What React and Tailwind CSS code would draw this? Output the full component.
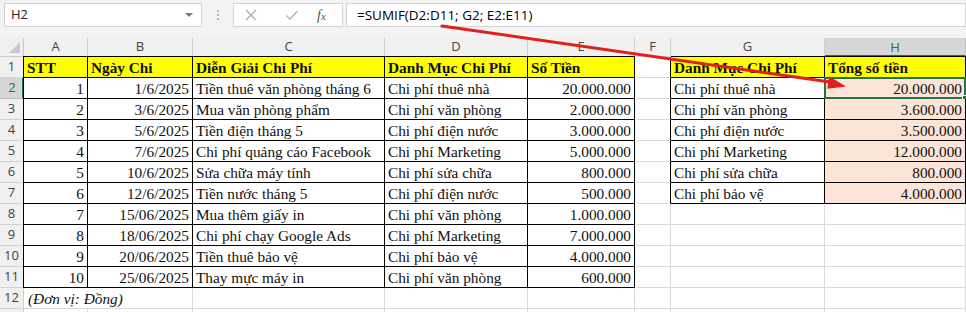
import React from 'react';

const rows = [
  [1, '1/6/2025', 'Tiền thuê văn phòng tháng 6', 'Chi phí thuê nhà', '20.000.000'],
  [2, '3/6/2025', 'Mua văn phòng phẩm', 'Chi phí văn phòng', '2.000.000'],
  [3, '5/6/2025', 'Tiền điện tháng 5', 'Chi phí điện nước', '3.000.000'],
  [4, '7/6/2025', 'Chi phí quảng cáo Facebook', 'Chi phí Marketing', '5.000.000'],
  [5, '10/6/2025', 'Sửa chữa máy tính', 'Chi phí sửa chữa', '800.000'],
  [6, '12/6/2025', 'Tiền nước tháng 5', 'Chi phí điện nước', '500.000'],
  [7, '15/06/2025', 'Mua thêm giấy in', 'Chi phí văn phòng', '1.000.000'],
  [8, '18/06/2025', 'Chi phí chạy Google Ads', 'Chi phí Marketing', '7.000.000'],
  [9, '20/06/2025', 'Tiền thuê bảo vệ', 'Chi phí bảo vệ', '4.000.000'],
  [10, '25/06/2025', 'Thay mực máy in', 'Chi phí văn phòng', '600.000'],
];

const totals = [
  ['Chi phí thuê nhà', '20.000.000'],
  ['Chi phí văn phòng', '3.600.000'],
  ['Chi phí điện nước', '3.500.000'],
  ['Chi phí Marketing', '12.000.000'],
  ['Chi phí sửa chữa', '800.000'],
  ['Chi phí bảo vệ', '4.000.000'],
];

const cell = 'h-[21px] px-[3px] text-[15.3px] leading-[21px] whitespace-nowrap overflow-hidden text-[#111] border-r border-b';
const black = 'border-black';
const grid = 'border-[#dadada]';

function RowHead({ n, active }) {
  return (
    <div
      className={
        active
          ? 'h-[21px] flex items-center justify-center text-[13px] text-[#217346] bg-[#d6d6d6] border-b border-[#bdbdbd] shadow-[inset_-2px_0_0_#217346]'
          : 'h-[21px] flex items-center justify-center text-[13px] text-[#444] bg-[#f0f0f0] border-r border-b border-[#d0d0d0]'
      }
    >
      {n}
    </div>
  );
}

export default function App() {
  return (
    <div className="relative w-[966px] h-[312px] overflow-hidden bg-[#f3f3f3] font-['Liberation_Serif',serif]">
      {/* formula bar */}
      <div className="h-[38px] flex items-start pt-[3px] pl-[4px] font-['Open_Sans',sans-serif]">
        <div className="w-[198px] h-[24px] bg-white border border-[#d4d4d4] flex items-center justify-between pl-[6px] pr-[8px]">
          <span className="text-[13px] text-[#222]">H2</span>
          <span className="w-0 h-0 border-l-[4px] border-r-[4px] border-t-[4px] border-l-transparent border-r-transparent border-t-[#777]" />
        </div>
        <div className="w-[31px] h-[24px] flex flex-col items-center justify-center gap-[2px]">
          <span className="w-[2px] h-[2px] bg-[#b5b5b5]" />
          <span className="w-[2px] h-[2px] bg-[#b5b5b5]" />
          <span className="w-[2px] h-[2px] bg-[#b5b5b5]" />
        </div>
        <div className="w-[110px] h-[24px] bg-white border border-[#d4d4d4] flex items-center">
          <svg width="14" height="14" viewBox="0 0 14 14" className="ml-[10px]">
            <path d="M2 2 L12 12 M12 2 L2 12" stroke="#b0b0b0" strokeWidth="1.3" />
          </svg>
          <svg width="14" height="14" viewBox="0 0 14 14" className="ml-[27px]">
            <path d="M1.5 7.5 L5 11 L12.5 3" stroke="#b0b0b0" strokeWidth="1.3" fill="none" />
          </svg>
          <span className="ml-[18px] text-[14px] italic text-[#555] font-['Liberation_Serif',serif]">
            f<span className="text-[11px]">x</span>
          </span>
        </div>
        <div className="ml-[3px] flex-1 h-[24px] bg-white border border-[#d4d4d4] flex items-center pl-[10px]">
          <span className="text-[13.5px] text-black">=SUMIF(D2:D11; G2; E2:E11)</span>
        </div>
      </div>

      {/* sheet */}
      <div className="grid grid-cols-[24px_64px_105px_192px_143px_107px_36px_154px_141px] bg-white">
        {/* column headers */}
        <div className="h-[19px] bg-[#f0f0f0] border-r border-b border-[#c8c8c8] flex items-end justify-end p-[3px]">
          <span className="w-0 h-0 border-l-[11px] border-l-transparent [border-bottom:11px_solid_#c9c9c9]" />
        </div>
        {['A', 'B', 'C', 'D', 'E', 'F', 'G'].map((c) => (
          <div key={c} className="h-[19px] bg-[#f0f0f0] border-r border-b border-[#d0d0d0] flex items-center justify-center text-[13px] text-[#444] font-['Open_Sans',sans-serif]">
            {c}
          </div>
        ))}
        <div className="h-[19px] bg-[#d6d6d6] border-r border-[#bdbdbd] shadow-[inset_0_-2px_0_#217346] flex items-center justify-center text-[13px] text-[#217346] font-['Open_Sans',sans-serif]">
          H
        </div>

        {/* row 1 */}
        <div className="font-['Open_Sans',sans-serif]"><RowHead n={1} /></div>
        <div className={`${cell} ${black} bg-[#ffff00] font-bold shadow-[-1px_0_0_#000,0_-1px_0_#000,-1px_-1px_0_#000]`}>STT</div>
        <div className={`${cell} ${black} bg-[#ffff00] font-bold shadow-[0_-1px_0_#000]`}>Ngày Chi</div>
        <div className={`${cell} ${black} bg-[#ffff00] font-bold shadow-[0_-1px_0_#000]`}>Diễn Giải Chi Phí</div>
        <div className={`${cell} ${black} bg-[#ffff00] font-bold shadow-[0_-1px_0_#000]`}>Danh Mục Chi Phí</div>
        <div className={`${cell} ${black} bg-[#ffff00] font-bold shadow-[0_-1px_0_#000]`}>Số Tiền</div>
        <div className="h-[21px] border-r border-b border-r-black border-b-[#dadada]" />
        <div className={`${cell} ${black} bg-[#ffff00] font-bold shadow-[0_-1px_0_#000]`}>Danh Mục Chi Phí</div>
        <div className={`${cell} ${black} bg-[#ffff00] font-bold shadow-[0_-1px_0_#000]`}>Tổng số tiền</div>

        {/* rows 2-11 */}
        {rows.map((r, i) => {
          const t = totals[i];
          return (
            <React.Fragment key={i}>
              <div className="font-['Open_Sans',sans-serif]"><RowHead n={i + 2} active={i === 0} /></div>
              <div className={`${cell} ${black} text-right shadow-[-1px_0_0_#000]`}>{r[0]}</div>
              <div className={`${cell} ${black} text-right`}>{r[1]}</div>
              <div className={`${cell} ${black}`}>{r[2]}</div>
              <div className={`${cell} ${black}`}>{r[3]}</div>
              <div className={`${cell} ${black} text-right`}>{r[4]}</div>
              <div className={t ? 'h-[21px] border-r border-b border-r-black border-b-[#dadada]' : 'h-[21px] border-r border-b border-[#dadada]'} />
              {t ? (
                <>
                  <div className={`${cell} ${black}`}>{t[0]}</div>
                  <div className={`${cell} ${black} relative overflow-visible text-right bg-[#fce4d6]`}>
                    {t[1]}
                    {i === 0 && (
                      <>
                        <span className="absolute left-[-1px] top-[-1px] right-[-1px] bottom-[-1px] border-2 border-[#217346]" />
                        <span className="absolute right-[-3px] bottom-[-3px] w-[6px] h-[6px] bg-[#217346] border border-white" />
                      </>
                    )}
                  </div>
                </>
              ) : (
                <>
                  <div className={`${cell} ${grid}`} />
                  <div className={`${cell} ${grid}`} />
                </>
              )}
            </React.Fragment>
          );
        })}

        {/* row 12 */}
        <div className="font-['Open_Sans',sans-serif]"><RowHead n={12} /></div>
        <div className={`${cell} ${grid} col-span-2 italic pl-[4px]`}>(Đơn vị: Đồng)</div>
        <div className={`${cell} ${grid}`} />
        <div className={`${cell} ${grid}`} />
        <div className={`${cell} ${grid}`} />
        <div className={`${cell} ${grid}`} />
        <div className={`${cell} ${grid}`} />
        <div className={`${cell} ${grid}`} />

        {/* row 13, mostly below the edge */}
        <div className="h-[21px] bg-[#f0f0f0] border-r border-b border-[#d0d0d0]" />
        {[0, 1, 2, 3, 4, 5, 6, 7].map((k) => (
          <div key={k} className={`${cell} ${grid}`} />
        ))}
      </div>

      {/* red arrow */}
      <svg className="pointer-events-none absolute left-0 top-0" width="966" height="312">
        <line x1="442" y1="26" x2="830" y2="82" stroke="#e0201c" strokeWidth="3" strokeLinecap="round" />
        <polygon points="846,86.5 827.3,88.8 829.1,76.2" fill="#e0201c" />
      </svg>
    </div>
  );
}
